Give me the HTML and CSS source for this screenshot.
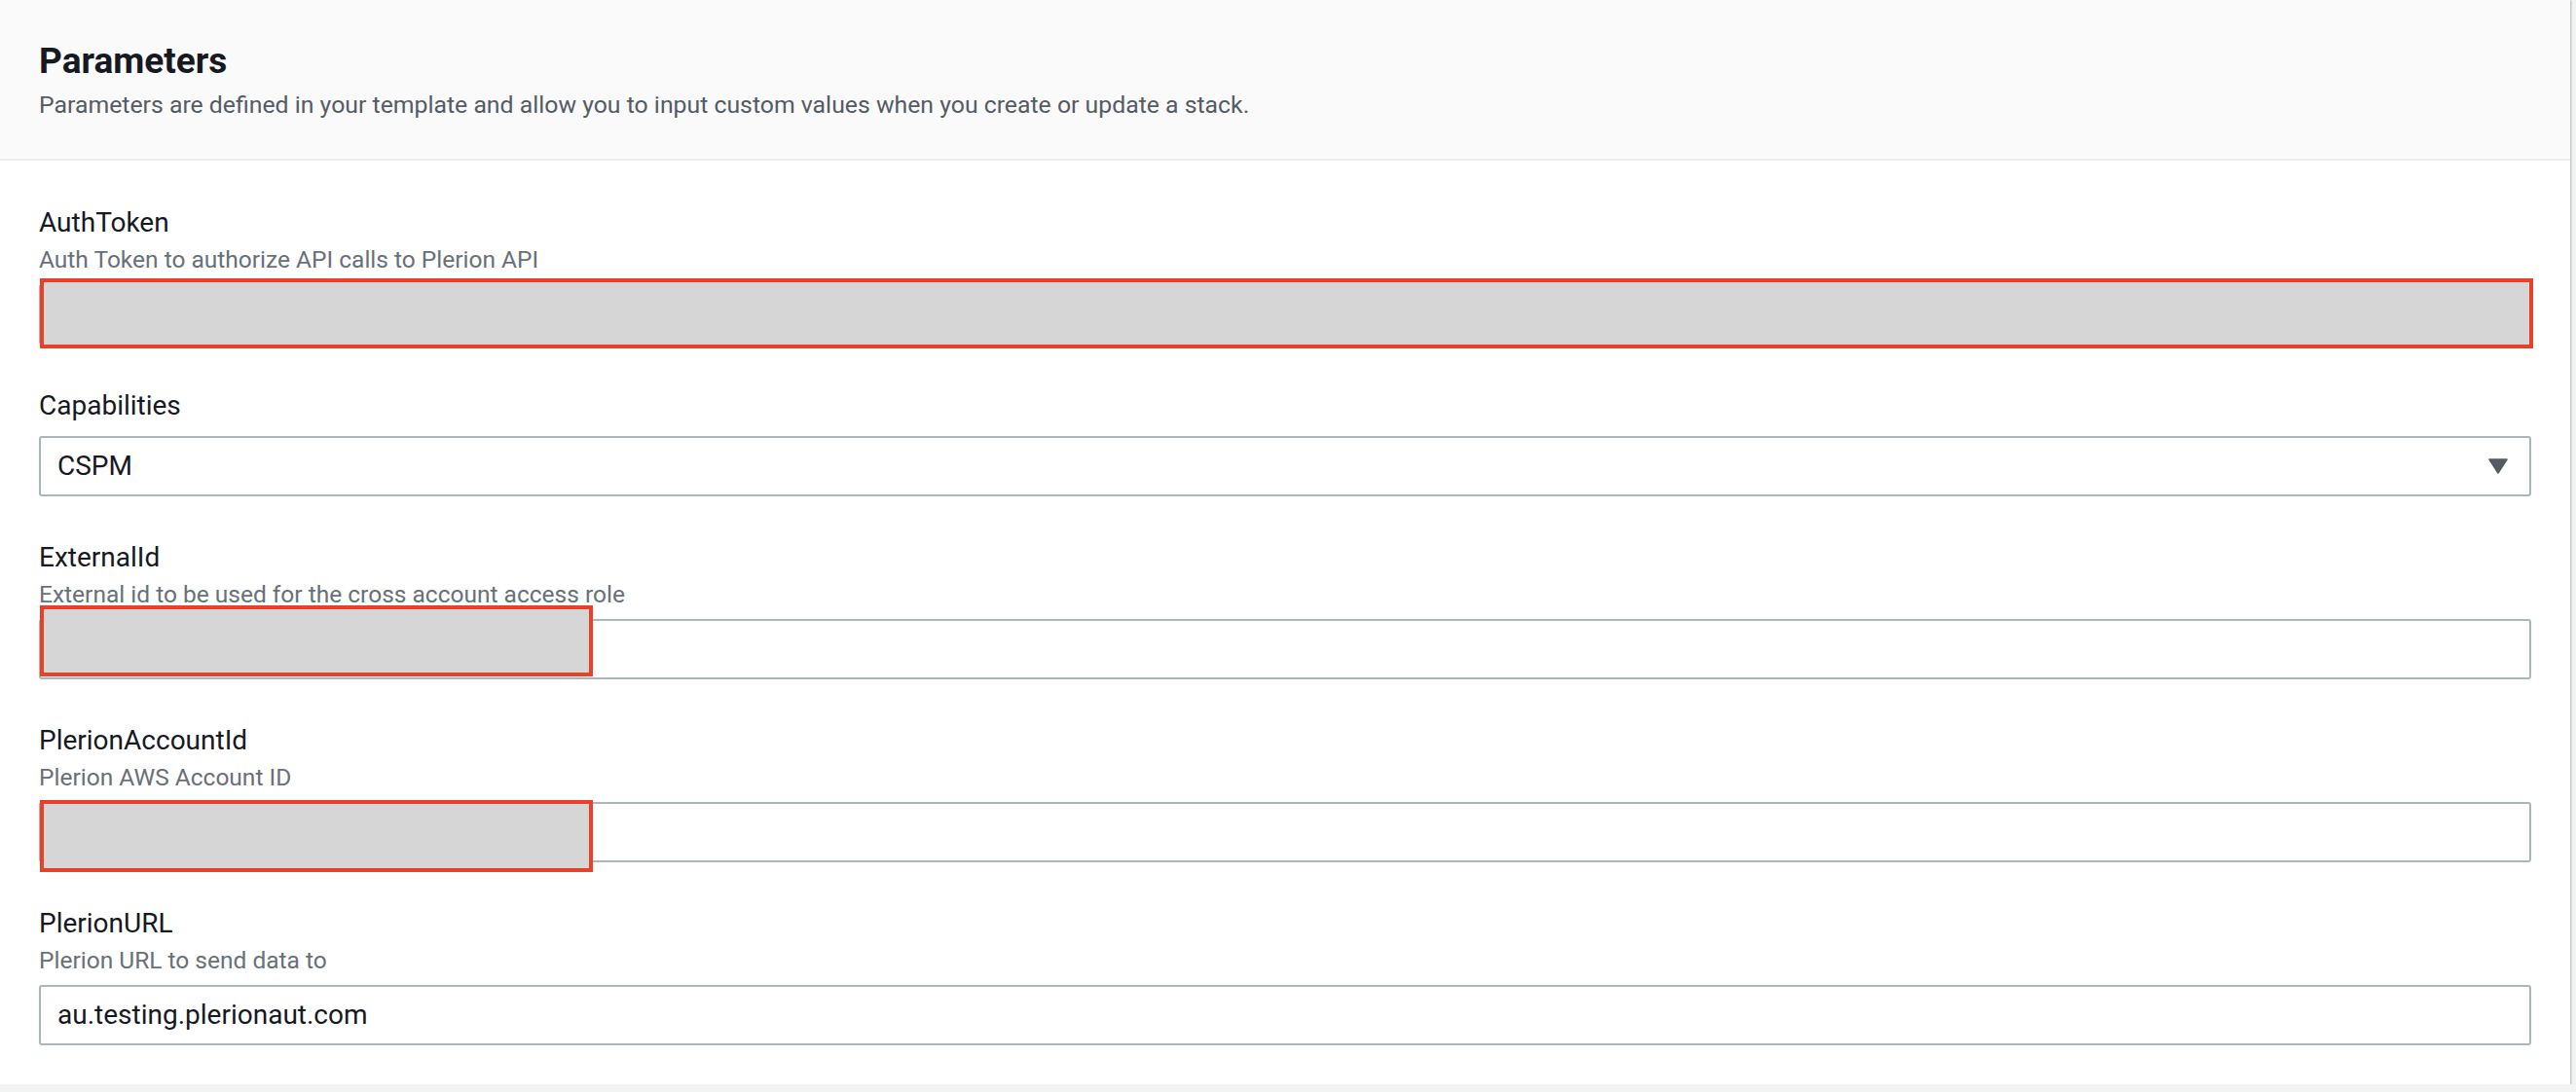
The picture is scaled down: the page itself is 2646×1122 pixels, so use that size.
FILE: index.html
```html
<!DOCTYPE html>
<html lang="en">
<head>
<meta charset="utf-8">
<title>Parameters</title>
<link rel="stylesheet" href="styles.css">
</head>
<body>
<div class="panel">
  <div class="panel-header">
    <h2 class="panel-title">Parameters</h2>
    <p class="panel-desc">Parameters are defined in your template and allow you to input custom values when you create or update a stack.</p>
  </div>
  <div class="panel-body">
    <div class="field">
      <div class="field-label">AuthToken</div>
      <div class="field-desc">Auth Token to authorize API calls to Plerion API</div>
      <div class="control">
        <input class="text-input" type="text" value="">
        <div class="redact redact-auth"></div>
      </div>
    </div>
    <div class="field">
      <div class="field-label">Capabilities</div>
      <div class="control control-select">
        <div class="select">
          <span class="select-value">CSPM</span>
          <svg class="select-arrow" width="20" height="16" viewBox="0 0 20 16"><path d="M1 1 H19 L10 15 Z" fill="#545b64" stroke="#545b64" stroke-width="1.5" stroke-linejoin="round"/></svg>
        </div>
      </div>
    </div>
    <div class="field">
      <div class="field-label">ExternalId</div>
      <div class="field-desc">External id to be used for the cross account access role</div>
      <div class="control">
        <input class="text-input" type="text" value="">
        <div class="redact redact-external"></div>
      </div>
    </div>
    <div class="field">
      <div class="field-label">PlerionAccountId</div>
      <div class="field-desc">Plerion AWS Account ID</div>
      <div class="control">
        <input class="text-input" type="text" value="">
        <div class="redact redact-account"></div>
      </div>
    </div>
    <div class="field">
      <div class="field-label">PlerionURL</div>
      <div class="field-desc">Plerion URL to send data to</div>
      <div class="control">
        <input class="text-input" type="text" value="au.testing.plerionaut.com">
      </div>
    </div>
  </div>
</div>
</body>
</html>
```

FILE: styles.css
```css
* {
  box-sizing: border-box;
}

html, body {
  margin: 0;
  padding: 0;
}

body {
  background: #f2f3f3;
  font-family: Roboto, "Liberation Sans", Arial, sans-serif;
  color: #16191f;
}

.panel {
  width: 2640px;
  background: #ffffff;
  box-shadow: 0 1px 2px 1px rgba(0, 28, 36, 0.28);
}

.panel-header {
  background: #fafafa;
  border-bottom: 2px solid #eaeded;
  padding: 41px 40px 39px;
}

.panel-title {
  margin: 0;
  font-size: 37px;
  line-height: 44px;
  font-weight: 700;
  color: #16191f;
}

.panel-desc {
  margin: 7px 0 0;
  font-size: 24.8px;
  line-height: 32px;
  color: #545b64;
}

.panel-body {
  padding: 46px 40px 40px;
  display: flex;
  flex-direction: column;
  gap: 45px;
}

.field {
  display: flex;
  flex-direction: column;
}

.field-label {
  font-size: 28px;
  line-height: 36px;
  color: #16191f;
}

.field-desc {
  margin-top: 4px;
  font-size: 24.5px;
  line-height: 32px;
  color: #687078;
}

.control {
  position: relative;
  margin-top: 9px;
}

.control-select {
  margin-top: 12.5px;
}

.text-input {
  display: block;
  width: 100%;
  height: 62px;
  margin: 0;
  padding: 0 17px;
  border: 2px solid #aab7b8;
  border-radius: 3px;
  background: #ffffff;
  font-family: Roboto, "Liberation Sans", Arial, sans-serif;
  font-size: 28px;
  color: #16191f;
  outline: none;
}

.select {
  display: flex;
  align-items: center;
  justify-content: space-between;
  height: 62px;
  padding: 0 22px 0 17px;
  border: 2px solid #aab7b8;
  border-radius: 3px;
  background: #ffffff;
  font-size: 28px;
  color: #16191f;
}

.select-arrow {
  display: block;
}

.redact {
  position: absolute;
  left: 1px;
  background: #d6d6d6;
  border: 4px solid #e9402a;
}

.redact-auth {
  top: -6px;
  bottom: -4px;
  right: -2px;
}

.redact-external {
  top: -13.5px;
  bottom: 2.5px;
  width: 568px;
}

.redact-account {
  top: -1.5px;
  bottom: -10.5px;
  width: 568px;
}
```
